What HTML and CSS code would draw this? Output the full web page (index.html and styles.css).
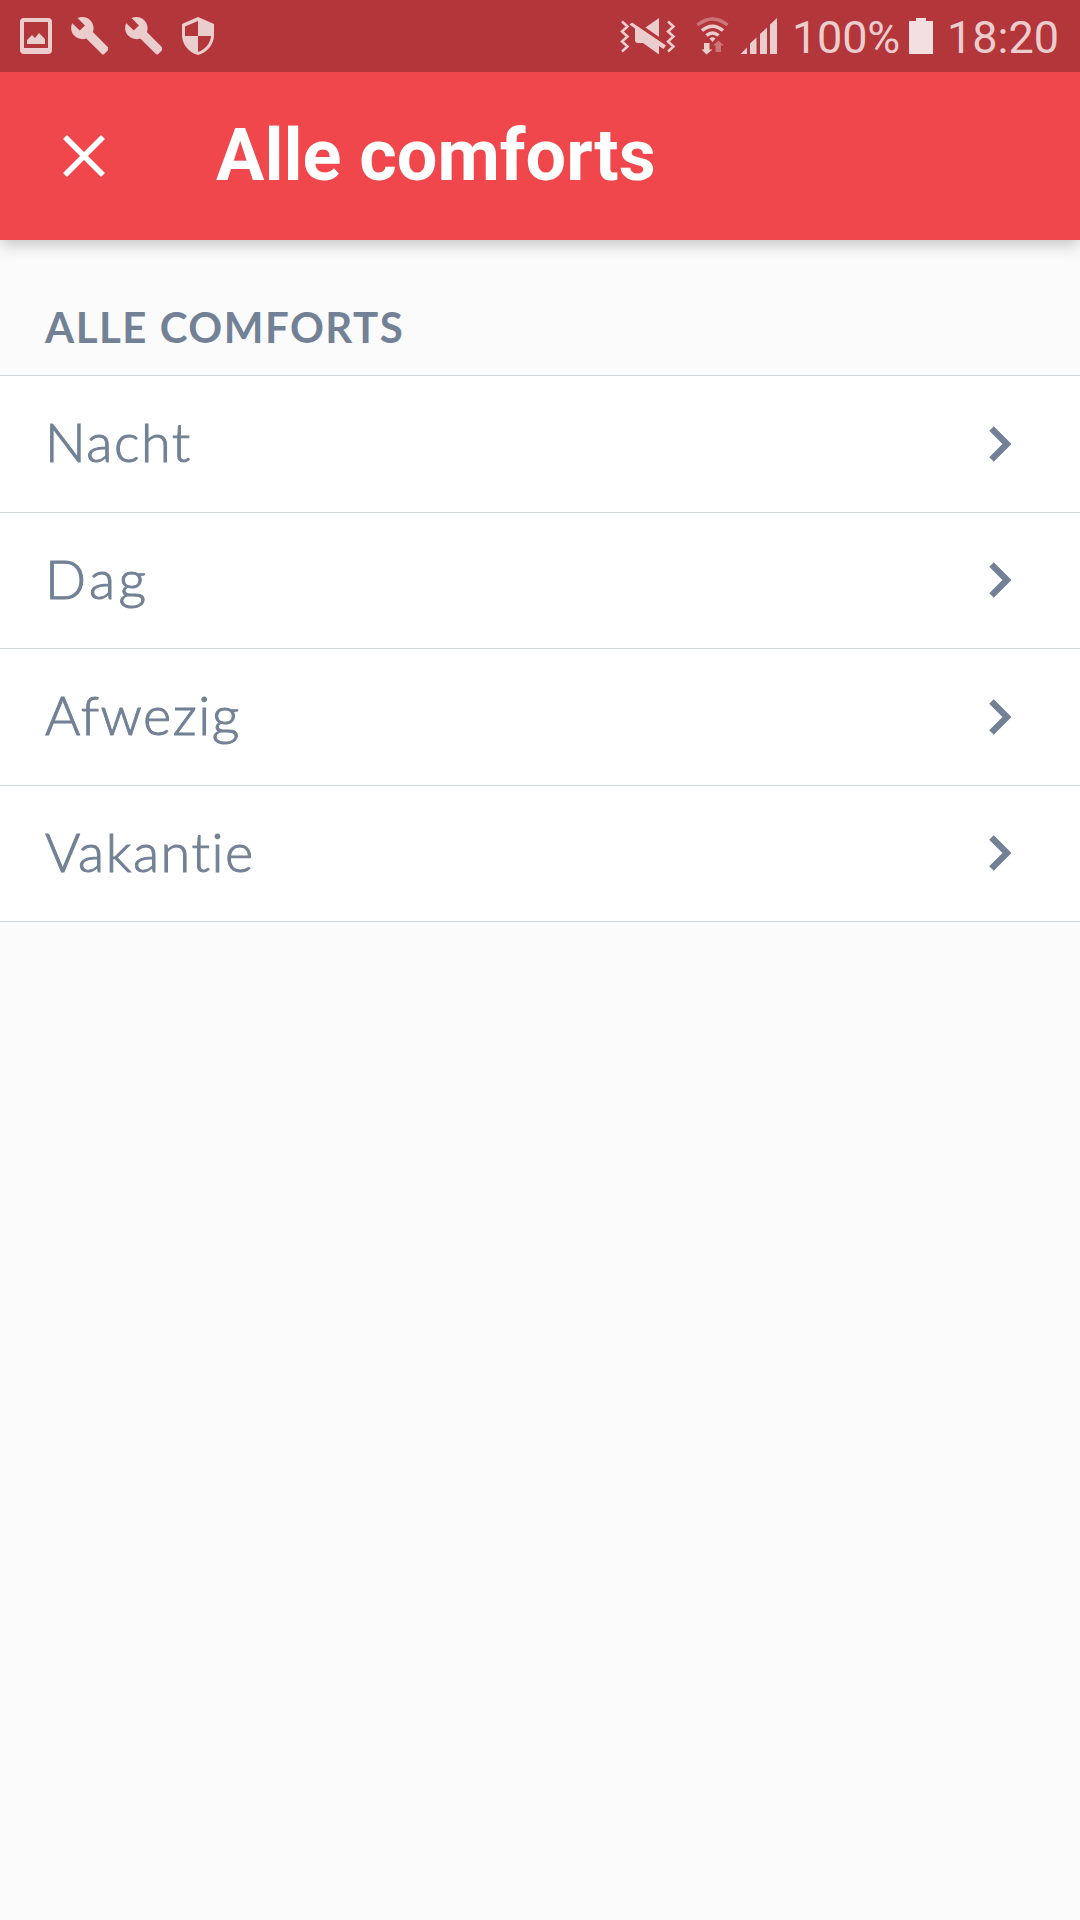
FILE: index.html
```html
<!DOCTYPE html>
<html lang="nl">
<head>
<meta charset="utf-8">
<title>Alle comforts</title>
<link rel="stylesheet" href="styles.css">
</head>
<body>
<div class="status">
  <div class="status-group">
    <svg class="ico" width="54" height="72" viewBox="0 0 54 72"><path fill-rule="evenodd" d="M24 18h24q4 0 4 4v28q0 4-4 4h-24q-4 0-4-4v-28q0-4 4-4zM24 22v26h24v-26zM27 44v-4l5-5 3 3 4-5 6 6v5z"/></svg>
    <svg class="ico" width="54" height="72" viewBox="0 0 54 72"><path transform="translate(15.5 15.1) scale(1.715)" d="M22.7 19l-9.1-9.1c.9-2.3.4-5-1.5-6.9-2-2-5-2.4-7.4-1.3L9 6 6 9 1.6 4.7C.4 7.1.9 10.1 2.9 12.1c1.9 1.9 4.6 2.4 6.9 1.5l9.1 9.1c.4.4 1 .4 1.4 0l2.3-2.3c.5-.4.5-1.1.1-1.4z"/></svg>
    <svg class="ico" width="54" height="72" viewBox="0 0 54 72"><path transform="translate(15.5 15.1) scale(1.715)" d="M22.7 19l-9.1-9.1c.9-2.3.4-5-1.5-6.9-2-2-5-2.4-7.4-1.3L9 6 6 9 1.6 4.7C.4 7.1.9 10.1 2.9 12.1c1.9 1.9 4.6 2.4 6.9 1.5l9.1 9.1c.4.4 1 .4 1.4 0l2.3-2.3c.5-.4.5-1.1.1-1.4z"/></svg>
    <svg class="ico" width="54" height="72" viewBox="0 0 54 72"><path fill-rule="evenodd" d="M36 17l16 7v11c0 9-6 17-16 20c-10-3-16-11-16-20v-11zM36 21l-13 5.500v9.500h13zM36 36v16c7-2.500 12.500-8.500 13-16z"/></svg>
  </div>
  <div class="status-group">
    <svg class="ico" width="71" height="72" viewBox="615 0 71 72">
      <path class="line" d="M622 21.500l5.500 5-5.500 5 5.500 5-5.500 5 5.500 5-5.500 5M668 21.500l5.500 5-5.500 5 5.500 5-5.500 5 5.500 5-5.500 5"/>
      <path d="M659 18v19l-13.500-9.500zM632 22.500L666 45.500l-2.500 3.500-4.500-3v8.500l-16-11.500h-5q-3 0-3-3v-11.500l-5.500-4z"/>
    </svg>
    <svg class="ico" width="52" height="72" viewBox="686 0 52 72">
      <path class="arc dim" d="M697.500 25q15-12 30 0"/>
      <path class="arc" d="M702 30.500q10.500-8.500 21 0M706.500 35.500q6-5 12 0"/>
      <path d="M709.500 38.500q3-2.500 6 0l-3 3.500zM704 43h5.500v6.500h3l-6 5-5-5h2.500z"/>
      <path class="faint" d="M715.500 52v-6.500h-2.500l5.500-5 5.500 5h-3V52z"/>
    </svg>
    <svg class="ico" width="50" height="72" viewBox="738 0 50 72"><path d="M740.500 54l6.500-6.500V54zM750 54V43.500l6.500-6V54zM760 54V34l7-6.500V54zM770 54V24.500l7-6.500V54z"/></svg>
    <span class="status-text pct">100%</span>
    <svg class="ico battery" width="24" height="72" viewBox="0 0 24 72"><path d="M0 21h7v-3h10v3h7v33H0z"/></svg>
    <span class="status-text clock">18:20</span>
  </div>
</div>
<header class="bar">
  <svg class="close" width="42" height="42" viewBox="0 0 42 42"><path d="M2 2l38 38M40 2L2 40"/></svg>
  <h1 class="title">Alle comforts</h1>
</header>
<main>
  <h2 class="section">ALLE COMFORTS</h2>
  <ul class="list">
    <li class="row"><span class="label">Nacht</span><svg class="chev" width="22" height="36" viewBox="0 0 22 36"><path d="M2.500 2.500L18 18 2.500 33.500"/></svg></li>
    <li class="row"><span class="label wide">Dag</span><svg class="chev" width="22" height="36" viewBox="0 0 22 36"><path d="M2.500 2.500L18 18 2.500 33.500"/></svg></li>
    <li class="row"><span class="label">Afwezig</span><svg class="chev" width="22" height="36" viewBox="0 0 22 36"><path d="M2.500 2.500L18 18 2.500 33.500"/></svg></li>
    <li class="row"><span class="label">Vakantie</span><svg class="chev" width="22" height="36" viewBox="0 0 22 36"><path d="M2.500 2.500L18 18 2.500 33.500"/></svg></li>
  </ul>
</main>
</body>
</html>
```
FILE: styles.css
```css
* { box-sizing: border-box; }
body { margin: 0; width: 1080px; height: 1920px; background: #fbfbfb; overflow: hidden; }
svg { display: block; flex: none; }
.status { position: relative; z-index: 1; height: 72px; background: #b3363b; display: flex; justify-content: space-between; padding-right: 20px; }
.status-group { display: flex; }
.ico { fill: #eccdce; }
.line { fill: none; stroke: #eccdce; stroke-width: 2.5; }
.arc { fill: none; stroke: #eccdce; stroke-width: 3.5; }
.dim { stroke: #cc7579; }
.faint { fill: #cc7579; }
.battery { fill: #f4dfe0; margin-left: 8px; }
.status-text { font: 400 45px/72px Roboto, sans-serif; color: #eccdce; padding-top: 2px; white-space: nowrap; }
.pct { width: 113px; padding-left: 4px; letter-spacing: -.2px; }
.clock { margin-left: 14px; width: 113px; }
.bar { position: relative; height: 168px; background: #f0474d; box-shadow: 0 4px 16px rgba(0, 0, 0, .24); display: flex; align-items: center; padding: 0 0 0 63px; }
.close path { fill: none; stroke: #fff; stroke-width: 5.5; }
.title { margin: 0 0 0 111px; font: 700 72px/84px Roboto, sans-serif; color: #fff; }
.section { margin: 0; height: 135px; padding: 62px 0 0 45px; font: 700 42px/50px Lato, sans-serif; letter-spacing: 1.5px; color: #728195; white-space: nowrap; }
.list { margin: 0; padding: 0; list-style: none; background: #fff; border-top: 1.5px solid #d0d5d9; }
.row { height: 136.5px; border-bottom: 1px solid #d0d5d9; display: flex; justify-content: space-between; align-items: center; padding: 0 69px 0 45px; }
.label { font: 300 54px/66px Lato, sans-serif; -webkit-text-stroke: 1px #728195; letter-spacing: 1.5px; color: #728195; margin-bottom: 3px; }
.wide { letter-spacing: 3.6px; }
.chev path { fill: none; stroke: #728195; stroke-width: 6.5; }
```
